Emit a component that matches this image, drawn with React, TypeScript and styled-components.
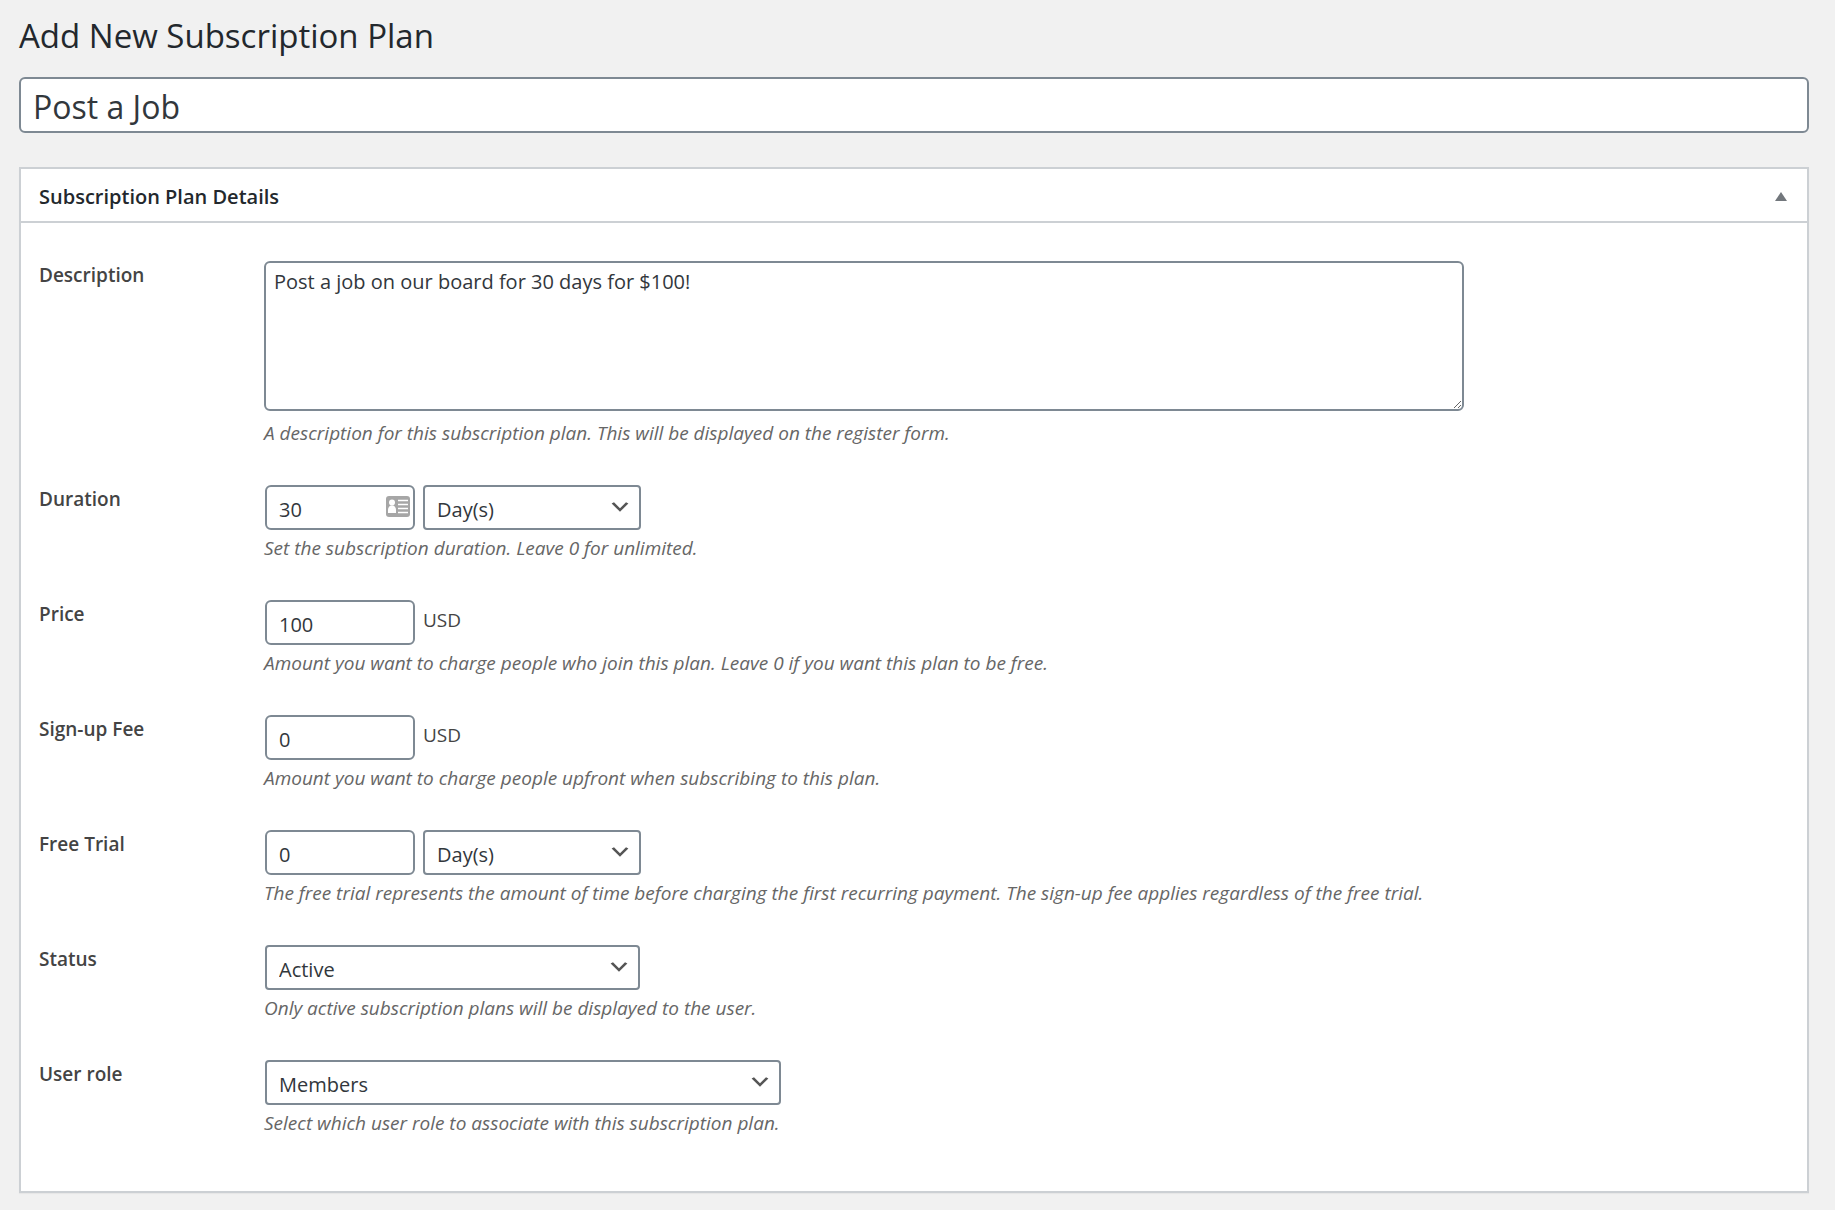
import React, { useState } from "react";
import styled, { createGlobalStyle, css } from "styled-components";

const GlobalStyle = createGlobalStyle`
  *, *::before, *::after { box-sizing: border-box; }
  body {
    margin: 0;
    background: #f1f1f1;
    color: #444;
    font-family: "Segoe UI", "Open Sans", "Noto Sans", sans-serif;
    font-size: 19px;
    line-height: 28px;
  }
`;

const Page = styled.form`
  padding: 12px 26px 17px 19px;
`;

const PageTitle = styled.h1`
  margin: 0 0 17px;
  color: #23282d;
  font-size: 33px;
  font-weight: 400;
  line-height: 48px;
`;

const controlStyle = css`
  border: 2px solid #7e8993;
  border-radius: 6px;
  background: #fff;
  color: #32373c;
  font-family: inherit;
  font-size: 20px;

  &:focus {
    outline: none;
    border-color: #007cba;
  }
`;

const PlanName = styled.input`
  ${controlStyle}
  display: block;
  width: 100%;
  height: 56px;
  padding: 2px 12px 0;
  font-size: 32px;
`;

const Panel = styled.section`
  margin-top: 34px;
  border: 2px solid #ccd0d4;
  background: #fff;
  box-shadow: 0 1px 1px rgba(0, 0, 0, 0.04);
`;

const PanelHeader = styled.header`
  display: flex;
  align-items: center;
  justify-content: space-between;
  height: 54px;
  padding: 0 20px 0 18px;
  border-bottom: 2px solid #ccd0d4;
`;

const PanelTitle = styled.h2`
  margin: 0;
  padding-top: 4px;
  color: #23282d;
  font-size: 20px;
  font-weight: 600;
  line-height: 28px;
`;

const ToggleButton = styled.button`
  display: flex;
  padding: 2px 0 0;
  border: 0;
  background: none;
  color: #72777c;
  cursor: pointer;
`;

const PanelBody = styled.div`
  display: flex;
  flex-direction: column;
  gap: 38px;
  padding: 38px 18px 54px;
`;

const FieldRow = styled.div`
  display: grid;
  grid-template-columns: 225px minmax(0, 1fr);
`;

const FieldLabel = styled.label`
  justify-self: start;
  align-self: start;
  font-weight: 600;
`;

const Controls = styled.div`
  display: flex;
  gap: 8px;
  padding-left: 1px;
`;

const Help = styled.p`
  margin: 4px 0 0;
  color: #666;
  font-style: italic;
`;

const DescriptionBox = styled.textarea`
  ${controlStyle}
  display: block;
  width: 100%;
  max-width: 1200px;
  height: 150px;
  margin-bottom: 8px;
  padding: 5px 8px;
  line-height: 28px;
  resize: vertical;
`;

const InputWrap = styled.div`
  position: relative;
  width: 150px;
`;

const ShortInput = styled.input`
  ${controlStyle}
  display: block;
  width: 100%;
  height: 45px;
  padding: 3px 12px 0;
`;

const CardBadge = styled.svg`
  position: absolute;
  top: 11px;
  right: 5px;
  pointer-events: none;
`;

const Unit = styled.span`
  padding-top: 6px;
`;

const SelectWrap = styled.div<{ $width: number }>`
  position: relative;
  width: ${(p) => p.$width}px;
`;

const Select = styled.select`
  ${controlStyle}
  display: block;
  width: 100%;
  height: 45px;
  padding: 3px 36px 0 12px;
  border-radius: 4px;
  appearance: none;
  cursor: pointer;
`;

const Chevron = styled.svg`
  position: absolute;
  top: 10px;
  right: 9px;
  pointer-events: none;
`;

function ContactCardIcon() {
  return (
    <CardBadge width="24" height="21" viewBox="0 0 24 21" aria-hidden="true">
      <rect width="24" height="21" rx="3" fill="#a6a6a6" />
      <circle cx="6" cy="6.5" r="3" fill="#fff" />
      <path d="M2 17v-3c0-2.5 1.5-4 2.8-4.5h2.4C8.500 10 10 11.500 10 14v3z" fill="#fff" />
      <path d="M12 4.500h10M12 8.500h10M12 12.500h10M12 16.500h10" stroke="#fff" strokeWidth="1.5" />
    </CardBadge>
  );
}

interface FieldProps {
  id: string;
  label: string;
  help: string;
  children: React.ReactNode;
}

function Field({ id, label, help, children }: FieldProps) {
  return (
    <FieldRow>
      <FieldLabel htmlFor={id}>{label}</FieldLabel>
      <div>
        {children}
        <Help id={`${id}-help`}>{help}</Help>
      </div>
    </FieldRow>
  );
}

function NumberField({ id, value, card }: { id: string; value: string; card?: boolean }) {
  return (
    <InputWrap>
      <ShortInput id={id} type="text" inputMode="decimal" defaultValue={value} aria-describedby={`${id}-help`} />
      {card && <ContactCardIcon />}
    </InputWrap>
  );
}

interface DropdownProps {
  id: string;
  width: number;
  options: string[];
  label?: string;
}

function Dropdown({ id, width, options, label }: DropdownProps) {
  return (
    <SelectWrap $width={width}>
      <Select id={id} aria-label={label} defaultValue={options[0]}>
        {options.map((o) => (
          <option key={o}>{o}</option>
        ))}
      </Select>
      <Chevron width="24" height="24" viewBox="0 0 20 20" aria-hidden="true">
        <path d="M5 6l5 5 5-5 2 1-7 7-7-7 2-1z" fill="#555" />
      </Chevron>
    </SelectWrap>
  );
}

const periods = ["Day(s)", "Week(s)", "Month(s)", "Year(s)"];

export default function App() {
  const [open, setOpen] = useState(true);

  return (
    <>
      <GlobalStyle />
      <Page onSubmit={(e) => e.preventDefault()}>
        <PageTitle>Add New Subscription Plan</PageTitle>
        <PlanName type="text" aria-label="Plan name" defaultValue="Post a Job" />

        <Panel>
          <PanelHeader>
            <PanelTitle>Subscription Plan Details</PanelTitle>
            <ToggleButton
              type="button"
              aria-label="Toggle panel: Subscription Plan Details"
              aria-expanded={open}
              onClick={() => setOpen(!open)}
            >
              <svg width="12" height="9" viewBox="0 0 12 9" aria-hidden="true">
                <path d={open ? "M6 0l6 9H0z" : "M0 0h12L6 9z"} fill="currentColor" />
              </svg>
            </ToggleButton>
          </PanelHeader>

          {open && (
            <PanelBody>
              <Field
                id="description"
                label="Description"
                help="A description for this subscription plan. This will be displayed on the register form."
              >
                <DescriptionBox
                  id="description"
                  aria-describedby="description-help"
                  defaultValue="Post a job on our board for 30 days for $100!"
                />
              </Field>

              <Field id="duration" label="Duration" help="Set the subscription duration. Leave 0 for unlimited.">
                <Controls>
                  <NumberField id="duration" value="30" card />
                  <Dropdown id="duration-unit" label="Duration unit" width={218} options={periods} />
                </Controls>
              </Field>

              <Field
                id="price"
                label="Price"
                help="Amount you want to charge people who join this plan. Leave 0 if you want this plan to be free."
              >
                <Controls>
                  <NumberField id="price" value="100" />
                  <Unit>USD</Unit>
                </Controls>
              </Field>

              <Field
                id="signup-fee"
                label="Sign-up Fee"
                help="Amount you want to charge people upfront when subscribing to this plan."
              >
                <Controls>
                  <NumberField id="signup-fee" value="0" />
                  <Unit>USD</Unit>
                </Controls>
              </Field>

              <Field
                id="free-trial"
                label="Free Trial"
                help="The free trial represents the amount of time before charging the first recurring payment. The sign-up fee applies regardless of the free trial."
              >
                <Controls>
                  <NumberField id="free-trial" value="0" />
                  <Dropdown id="free-trial-unit" label="Free trial unit" width={218} options={periods} />
                </Controls>
              </Field>

              <Field id="status" label="Status" help="Only active subscription plans will be displayed to the user.">
                <Controls>
                  <Dropdown id="status" width={375} options={["Active", "Inactive"]} />
                </Controls>
              </Field>

              <Field
                id="user-role"
                label="User role"
                help="Select which user role to associate with this subscription plan."
              >
                <Controls>
                  <Dropdown id="user-role" width={516} options={["Members", "Subscriber"]} />
                </Controls>
              </Field>
            </PanelBody>
          )}
        </Panel>
      </Page>
    </>
  );
}
